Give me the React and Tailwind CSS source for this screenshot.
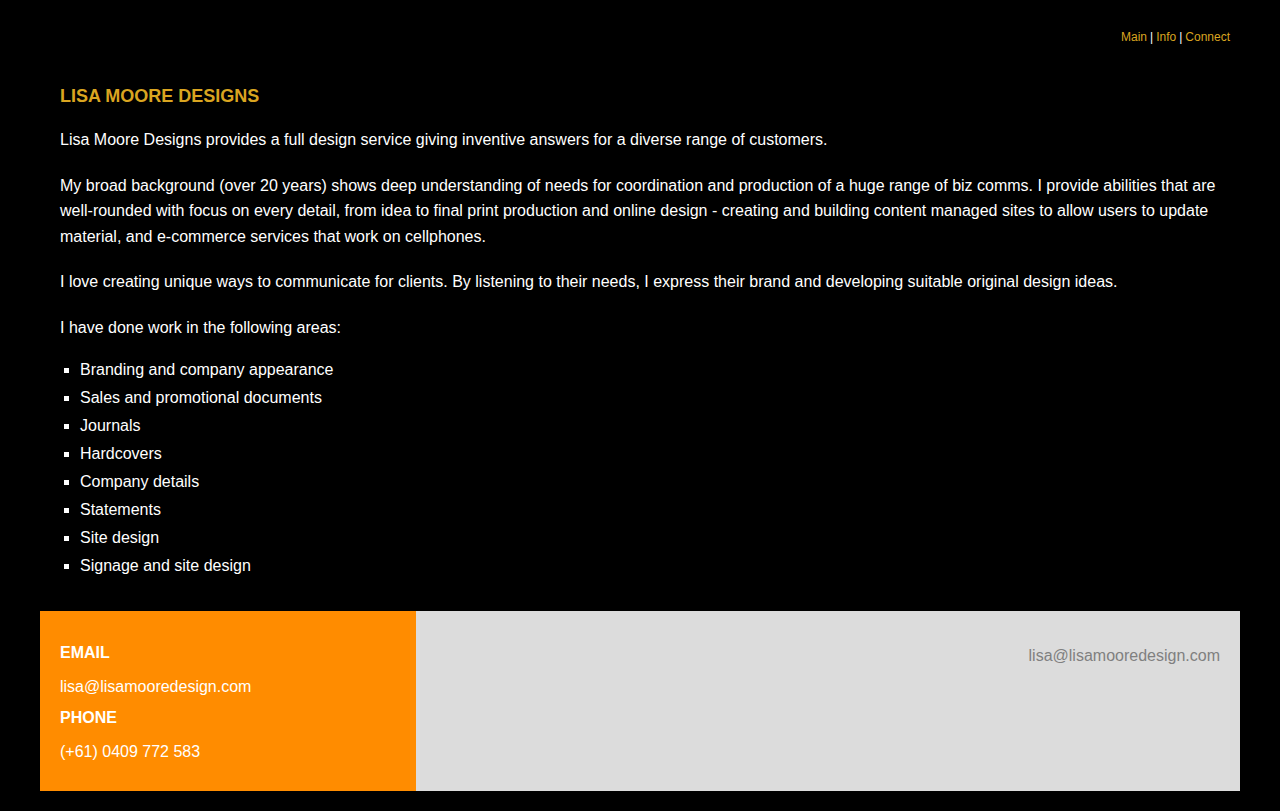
import React from 'react';

const areas = [
  'Branding and company appearance',
  'Sales and promotional documents',
  'Journals',
  'Hardcovers',
  'Company details',
  'Statements',
  'Site design',
  'Signage and site design',
];

const App = () => {
  return (
    <div className="min-h-[811px] bg-black font-['Liberation_Sans',Arial,sans-serif] text-white px-10 pb-5">
      {/* Top nav */}
      <nav className="flex justify-end pt-[30px] pr-[10px] text-[12px] leading-[14px] text-white">
        <a href="#main" className="text-[#daa520]">Main</a>
        <span className="px-[3px]">|</span>
        <a href="#info" className="text-[#daa520]">Info</a>
        <span className="px-[3px]">|</span>
        <a href="#connect" className="text-[#daa520]">Connect</a>
      </nav>

      {/* Main content */}
      <main className="px-5 pt-[42px]">
        <h1 className="text-[18px] leading-[20px] font-bold text-[#daa520] uppercase">Lisa Moore Designs</h1>
        <div className="mt-[21px] text-[16px] leading-[1.6] flex flex-col gap-5">
          <p>Lisa Moore Designs provides a full design service giving inventive answers for a diverse range of customers.</p>
          <p>
            My broad background (over 20 years) shows deep understanding of needs for coordination and production of a huge range of biz comms. I provide abilities that are well-rounded with focus on every detail, from idea to final print production and online design - creating and building content managed sites to allow users to update material, and e-commerce services that work on cellphones.
          </p>
          <p>I love creating unique ways to communicate for clients. By listening to their needs, I express their brand and developing suitable original design ideas.</p>
          <p>I have done work in the following areas:</p>
        </div>
        <ul className="mt-[15px] list-[square] pl-5 text-[16px] leading-[28px]">
          {areas.map((a) => (
            <li key={a}>{a}</li>
          ))}
        </ul>
      </main>

      {/* Footer */}
      <footer className="mt-[31px] flex h-[180px]">
        <div className="w-[376px] bg-[#ff8c00] px-5 pt-[32px] text-[16px] leading-[20px]">
          <div className="font-bold">EMAIL</div>
          <div className="mt-[14px]">lisa@lisamooredesign.com</div>
          <div className="mt-[11px] font-bold">PHONE</div>
          <div className="mt-[14px]">(+61) 0409 772 583</div>
        </div>
        <div className="flex-1 bg-[#dcdcdc] px-5 pt-[35px] text-right text-[16px] leading-[20px] text-[#808080]">
          lisa@lisamooredesign.com
        </div>
      </footer>
    </div>
  );
};

export default App;
